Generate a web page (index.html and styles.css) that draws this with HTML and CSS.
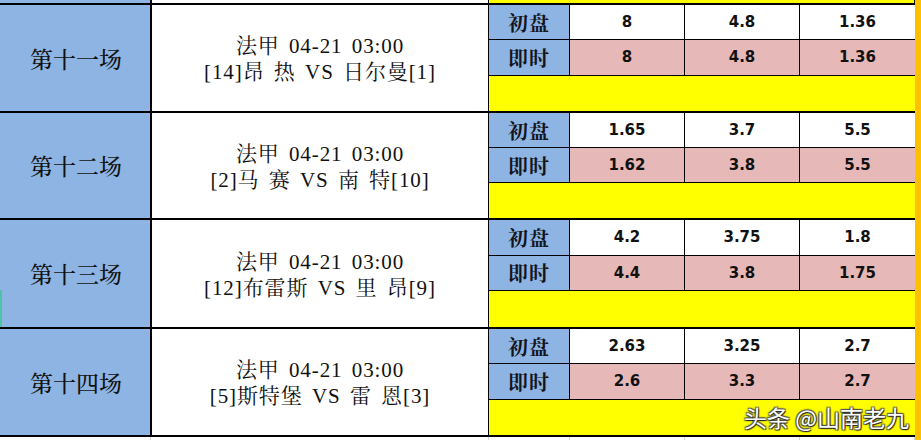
FILE: index.html
```html
<!DOCTYPE html>
<html lang="zh">
<head>
<meta charset="utf-8">
<title>法甲 赔率</title>
<link rel="stylesheet" href="styles.css">
</head>
<body>
<div class="sheet">
  <div class="table">
    <div class="row stub">
      <div class="c-left"></div>
      <div class="c-mid"></div>
      <div class="c-right stub-yellow"></div>
    </div>

    <div class="row block">
      <div class="c-left name">第十一场</div>
      <div class="c-mid match"><div>法甲 04-21 03:00</div><div>[14]昂 热 VS 日尔曼[1]</div></div>
      <div class="c-right odds">
        <div class="lab">初盘</div><div class="val">8</div><div class="val">4.8</div><div class="val">1.36</div>
        <div class="lab">即时</div><div class="val now">8</div><div class="val now">4.8</div><div class="val now">1.36</div>
        <div class="foot"></div>
      </div>
    </div>

    <div class="row block b2">
      <div class="c-left name">第十二场</div>
      <div class="c-mid match"><div>法甲 04-21 03:00</div><div>[2]马 赛 VS 南 特[10]</div></div>
      <div class="c-right odds">
        <div class="lab">初盘</div><div class="val">1.65</div><div class="val">3.7</div><div class="val">5.5</div>
        <div class="lab">即时</div><div class="val now">1.62</div><div class="val now">3.8</div><div class="val now">5.5</div>
        <div class="foot"></div>
      </div>
    </div>

    <div class="row block b3">
      <div class="c-left name">第十三场<span class="sel"></span></div>
      <div class="c-mid match"><div>法甲 04-21 03:00</div><div>[12]布雷斯 VS 里 昂[9]</div></div>
      <div class="c-right odds">
        <div class="lab">初盘</div><div class="val">4.2</div><div class="val">3.75</div><div class="val">1.8</div>
        <div class="lab">即时</div><div class="val now">4.4</div><div class="val now">3.8</div><div class="val now">1.75</div>
        <div class="foot"></div>
      </div>
    </div>

    <div class="row block b4">
      <div class="c-left name">第十四场</div>
      <div class="c-mid match"><div>法甲 04-21 03:00</div><div>[5]斯特堡 VS 雷 恩[3]</div></div>
      <div class="c-right odds">
        <div class="lab">初盘</div><div class="val">2.63</div><div class="val">3.25</div><div class="val">2.7</div>
        <div class="lab">即时</div><div class="val now">2.6</div><div class="val now">3.3</div><div class="val now">2.7</div>
        <div class="foot mark">头条 @山南老九</div>
      </div>
    </div>

    <div class="empty">
      <div class="g g1"></div><div class="g g2"></div><div class="g g3"></div><div class="g g4"></div><div class="g g5"></div><div class="g g6"></div>
    </div>
  </div>
  <div class="orange"></div>
</div>
</body>
</html>
```

FILE: styles.css
```css
html, body {
  margin: 0;
  padding: 0;
  background: #ffffff;
}
body {
  width: 921px;
  height: 440px;
  overflow: hidden;
}
.sheet {
  display: flex;
  width: 921px;
  height: 440px;
}
.table {
  width: 915px;
  display: flex;
  flex-direction: column;
}
.orange {
  width: 6px;
  background: #ffc000;
}
.row {
  display: grid;
  grid-template-columns: 152px 337px 426px;
  box-sizing: border-box;
}
.stub {
  height: 3px;
}
.block {
  border-top: 2px solid #000;
  height: 108px;
}
.b2 { height: 107px; }
.b3 { height: 109px; }
.b4 {
  height: 110px;
  border-bottom: 2px solid #000;
}
.c-left {
  background: #8db4e2;
  border-right: 2px solid #000;
  box-sizing: border-box;
  position: relative;
}
.c-mid {
  background: #fff;
  border-right: 1px solid #000;
  box-sizing: border-box;
}
.c-right {
  box-sizing: border-box;
  border-right: 1px solid #000;
}
.stub-yellow {
  background: #ffff00;
}
.name {
  display: flex;
  align-items: center;
  justify-content: center;
  font-family: "Noto Serif CJK SC", "Noto Sans CJK SC", serif;
  font-size: 23px;
  font-weight: 500;
  color: #111;
  padding-left: 2px;
}
.sel {
  position: absolute;
  left: 0;
  bottom: 0;
  width: 2px;
  height: 37px;
  background: #4fc3a6;
}
.match {
  display: flex;
  flex-direction: column;
  align-items: center;
  justify-content: center;
  font-family: "Liberation Serif", "Noto Serif CJK SC", "Noto Sans CJK SC", serif;
  font-size: 21px;
  line-height: 26px;
  letter-spacing: 0.9px;
  word-spacing: 0.15em;
  color: #111;
  padding-top: 2px;
  white-space: pre;
}
.odds {
  display: grid;
  grid-template-columns: 81px 115px 115px 115px;
  grid-template-rows: 1fr 1fr 1fr;
}
.lab, .val {
  display: flex;
  align-items: center;
  justify-content: center;
  border-right: 1px solid #000;
  border-bottom: 1px solid #000;
  box-sizing: border-box;
}
.val:nth-child(4), .val:nth-child(8) {
  border-right: 0;
}
.lab {
  background: #8db4e2;
  font-family: "Noto Serif CJK SC", "Noto Sans CJK SC", serif;
  font-size: 20px;
  font-weight: 700;
  color: #14141e;
  letter-spacing: 1px;
}
.val {
  background: #fff;
  font-family: "DejaVu Sans", Verdana, sans-serif;
  font-weight: 700;
  font-size: 15px;
  color: #111;
}
.val.now {
  background: #e6b8b7;
}
.foot {
  grid-column: 1 / 5;
  background: #ffff00;
}
.mark {
  display: flex;
  align-items: center;
  justify-content: flex-end;
  padding-right: 6px;
  font-family: "Noto Sans CJK SC", "Noto Sans", sans-serif;
  font-size: 23px;
  color: #fff;
  text-shadow: 1px 1px 1px #222, -1px -1px 1px #555, 1px -1px 1px #555, -1px 1px 1px #555;
}
.empty {
  flex: 1;
  position: relative;
  background: #fff;
}
.g {
  position: absolute;
  top: 0;
  bottom: 0;
  width: 1px;
  background: #d4d4d4;
}
.g1 { left: 150px; }
.g2 { left: 488px; }
.g3 { left: 569px; }
.g4 { left: 684px; }
.g5 { left: 799px; }
.g6 { left: 914px; }
```
